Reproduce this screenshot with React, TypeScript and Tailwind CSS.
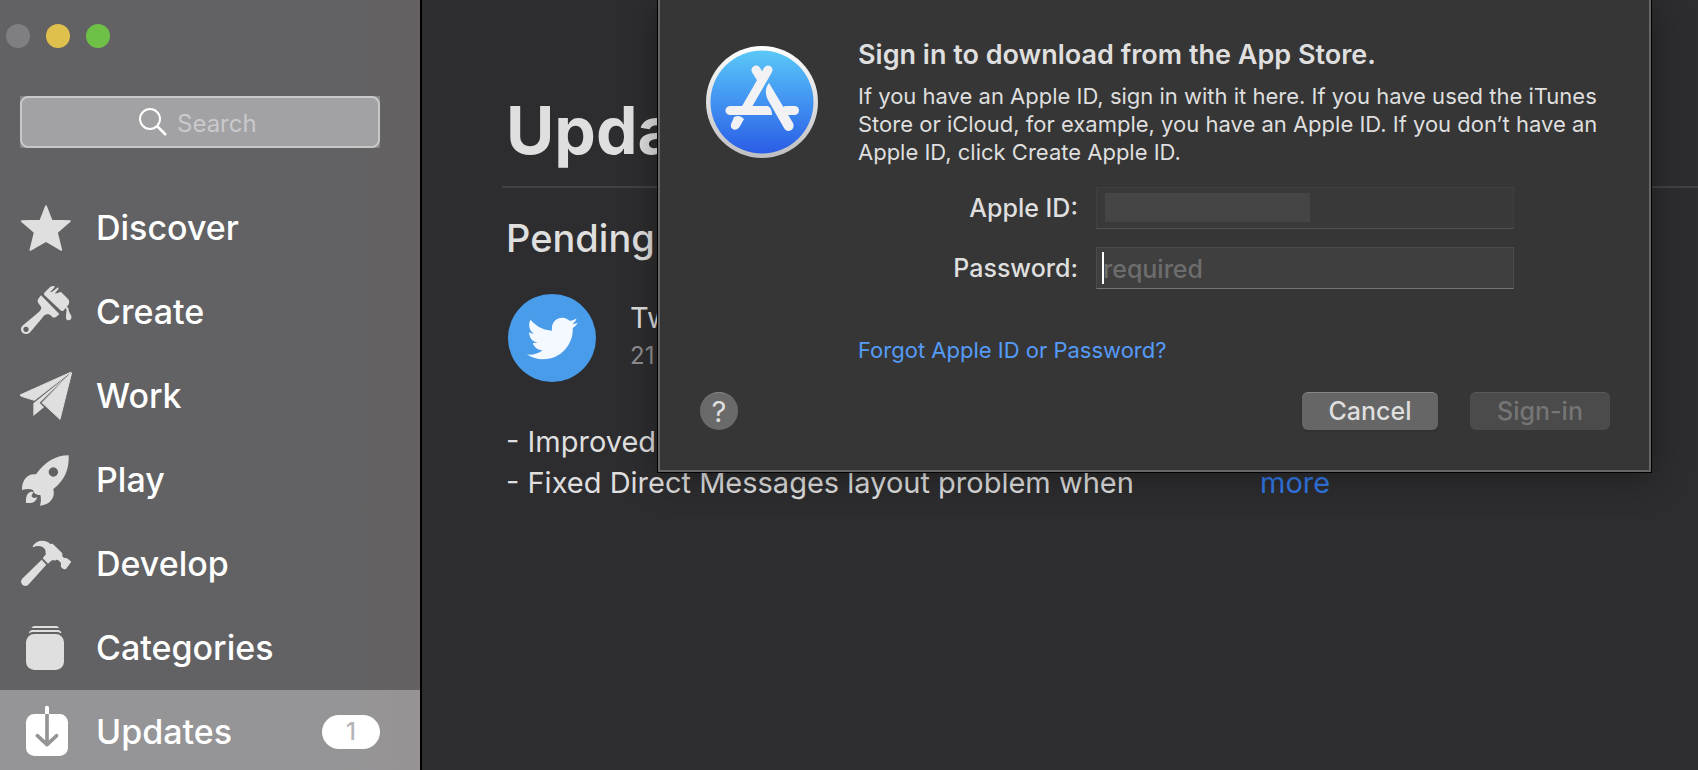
import type { ReactNode } from 'react';
import { FaTwitter } from 'react-icons/fa';

interface NavItem {
    label: string;
    icon: ReactNode;
    badge?: number;
}

const navItems: NavItem[] = [
    {
        label: 'Discover',
        icon: (
            <path
                d="M81 15 L98 59 L153 60 L114 94 L127 147 L81 120 L34 147 L47 94 L8 60 L64 59 Z"
                stroke="currentColor"
                strokeWidth="5"
                strokeLinejoin="round"
            />
        ),
    },
    {
        label: 'Create',
        icon: (
            <>
                <path
                    fillRule="evenodd"
                    d="M66 31 L121 87 L114 94 C108 99 102 99 97 93 C92 87 81 86 74 93 C66 103 48 126 34 141 C27 149 15 149 9 142 C4 135 5 127 12 121 L57 83 C66 75 70 70 64 62 C57 54 54 50 57 43 Z M21 125 a8 8 0 1 0 0.1 0 Z"
                />
                <path d="M76 23 L91 8 C96 3 104 2 108 5 L94 21 C99 24 111 10 117 7 L119 11 L108 25 C112 28 122 20 126 21 L148 43 C151 47 152 55 148 60 L133 77 C130 80 126 77 123 74 L75 29 Z" />
                <path d="M139 68 C145 74 142 80 141 93 C140 103 144 106 149 106 C155 106 159 100 157 93 C155 86 149 82 149 75 C149 69 147 66 143 65 Z" />
            </>
        ),
    },
    {
        label: 'Work',
        icon: (
            <>
                <path d="M3 78 L155 10 L46 94 L7 82 Z" stroke="currentColor" strokeWidth="3" strokeLinejoin="round" />
                <path d="M158 11 L123 151 L69 101 L150 18 Z" stroke="currentColor" strokeWidth="3" strokeLinejoin="round" />
                <path d="M43 103 L144 22 L62 101 L75 115 L43 141 Z" />
            </>
        ),
    },
    {
        label: 'Play',
        icon: (
            <>
                <path
                    fillRule="evenodd"
                    d="M149 7 C108 7 77 29 51 64 C25 60 8 82 9 111 C22 108 31 107 42 111 C44 120 51 126 64 126 C67 137 66 147 63 158 C92 156 110 134 103 108 C137 83 151 49 149 7 Z M103 43 a14 14 0 1 0 0.1 0 Z"
                />
                <path d="M36 116 C25 119 20 129 21 150 C42 152 53 145 54 131 C47 138 36 134 38 127 C39 122 45 119 43 117 Z" />
            </>
        ),
    },
    {
        label: 'Develop',
        icon: (
            <>
                <path d="M41 28 C51 8 79 6 94 21 L101 20 L130 49 L130 57 C134 66 140 60 147 66 L157 74 L141 96 C137 98 130 96 127 91 C123 86 129 82 124 76 C119 69 114 65 108 71 C100 64 92 77 87 80 L71 64 L81 51 C78 45 82 39 75 34 C68 26 54 25 42 31 Z" />
                <path d="M68 68 L82 83 L30 141 C24 149 14 148 9 142 C4 135 6 129 11 124 Z" />
            </>
        ),
    },
    {
        label: 'Categories',
        icon: (
            <>
                <path d="M37 21 C41 16 44 15 48 15 H110 C114 15 118 17 120 21 Z" />
                <path d="M30 34 C34 28 37 27 42 27 H115 C120 27 123 28 127 34 L126 37 C121 34 118 33 114 33 H43 C38 33 35 34 31 37 Z" />
                <rect x="21" y="39" width="114" height="108" rx="25" />
            </>
        ),
    },
    {
        label: 'Updates',
        badge: 1,
        icon: (
            <>
                <rect x="21" y="27" width="126" height="126" rx="25" />
                <path
                    d="M84 27 V118 M55 92 L84 119 L113 92"
                    fill="none"
                    stroke="#959597"
                    strokeWidth="11"
                    strokeLinecap="round"
                    strokeLinejoin="round"
                />
                <path d="M78 27 V7 a6 5 0 0 1 12 0 V27 Z" />
            </>
        ),
    },
];

function Sidebar() {
    return (
        <aside className="flex w-[422px] shrink-0 flex-col border-r-2 border-black bg-linear-to-r from-[#626264] from-80% to-[#656162]">
            <div className="flex gap-4 px-[6px] pt-6">
                <button aria-label="Close" className="h-6 w-6 rounded-full bg-[#7f7f81]" />
                <button aria-label="Minimize" className="h-6 w-6 rounded-full bg-[#e0c04c]" />
                <button aria-label="Zoom" className="h-6 w-6 rounded-full bg-[#6fc047]" />
            </div>

            <div className="mt-12 mr-10 ml-5 bg-[#858587]">
                <label className="flex h-[52px] items-center gap-[10px] rounded-lg border-2 border-[#c8c8c9] bg-[#a2a2a4] pl-[117px]">
                    <svg viewBox="0 0 28 28" className="h-7 w-7 shrink-0" fill="none" stroke="white" strokeWidth="2" aria-hidden="true">
                        <circle cx="11" cy="11" r="10" />
                        <path d="M18 18 L27 27" strokeWidth="2.5" />
                    </svg>
                    <input
                        type="search"
                        aria-label="Search"
                        placeholder="Search"
                        className="w-full min-w-0 bg-transparent pt-1 text-2xl text-white outline-none placeholder:text-[#c9c9cb]"
                    />
                </label>
            </div>

            <nav className="mt-[38px] flex flex-col">
                {navItems.map((item) => {
                    const active = item.label === 'Updates';
                    return (
                        <a
                            key={item.label}
                            href="#"
                            aria-current={active ? 'page' : undefined}
                            className={`flex h-[84px] items-center pr-10 pl-[19px] text-[34px] font-medium text-white ${
                                active ? 'bg-linear-to-r from-[#959597] from-80% to-[#979394]' : ''
                            }`}
                        >
                            <svg
                                viewBox="0 0 162 162"
                                fill="currentColor"
                                className={`mr-[23px] h-[54px] w-[54px] shrink-0 ${active ? 'text-white' : 'text-[#dfdfe0]'}`}
                                aria-hidden="true"
                            >
                                {item.icon}
                            </svg>
                            <span className="pb-[2px]">{item.label}</span>
                            {item.badge && (
                                <span className="ml-auto flex h-[34px] w-[58px] items-center justify-center rounded-full bg-white text-2xl text-[#b4b4b5]">
                                    {item.badge}
                                </span>
                            )}
                        </a>
                    );
                })}
            </nav>
        </aside>
    );
}

function AppStoreIcon() {
    return (
        <svg viewBox="0 0 112 112" className="h-28 w-28 shrink-0" aria-hidden="true">
            <defs>
                <linearGradient id="rim" x1="0" y1="0" x2="0" y2="1">
                    <stop offset="0" stopColor="#ffffff" />
                    <stop offset="1" stopColor="#bfbfc1" />
                </linearGradient>
                <linearGradient id="sky" x1="0" y1="0" x2="0" y2="1">
                    <stop offset="0" stopColor="#5ac8f8" />
                    <stop offset="0.5" stopColor="#4192f1" />
                    <stop offset="1" stopColor="#2a5de6" />
                </linearGradient>
            </defs>
            <circle cx="56" cy="56" r="56" fill="url(#rim)" />
            <circle cx="56" cy="56" r="51.5" fill="url(#sky)" />
            <g stroke="#f2f2f4" strokeWidth="9" strokeLinecap="round" fill="none">
                <path d="M50 24 L55 32" />
                <path d="M62 24 L39 64" />
                <path d="M80 64.5 H88.5" />
            </g>
            <g fill="#f2f2f4">
                <path d="M24 60 H61 C64 60 66 64 66 69 H24 C18 69 18 60 24 60 Z" />
                <path d="M63 37 C59 42 59 48 62 54 L78 82 C81 88 90 84 87 77 Z" />
                <path d="M28 71 C32 69 35 70 38 73 L33.5 81 C29 87 22 82 26 76 Z" />
            </g>
        </svg>
    );
}

function SignInDialog() {
    return (
        <div
            role="dialog"
            aria-labelledby="signin-title"
            className="absolute top-0 right-[46px] left-[235px] border-x border-b border-black shadow-[0_4px_32px_rgba(0,0,0,0.35)]"
        >
            <form className="border-x-2 border-b-2 border-[#666666] bg-[#363636] pt-[38px] pr-[39px] pb-10 pl-10 text-[#dfdfdf]">
                <div className="flex gap-10 pl-[6px]">
                    <div className="pt-2">
                        <AppStoreIcon />
                    </div>
                    <div className="min-w-0 flex-1">
                        <h2 id="signin-title" className="text-[27px] leading-[34px] font-semibold">
                            Sign in to download from the App Store.
                        </h2>
                        <p className="mt-[10px] text-[22px] leading-7">
                            If you have an Apple ID, sign in with it here. If you have used the iTunes Store or iCloud, for
                            example, you have an Apple ID. If you don’t have an Apple ID, click Create Apple ID.
                        </p>

                        <div className="mt-[21px] flex flex-col gap-[18px] text-[25px] font-medium">
                            <div className="flex items-center gap-[18px]">
                                <label htmlFor="apple-id" className="w-[220px] pt-[2px] text-right">
                                    Apple ID:
                                </label>
                                <div className="relative w-[418px]">
                                    <input
                                        id="apple-id"
                                        type="text"
                                        className="block h-[42px] w-full border border-[#404040] border-b-[#505050] bg-[#393939] px-2 outline-none"
                                    />
                                    <span className="absolute top-[6px] left-[9px] h-[29px] w-[205px] bg-[#454545]" />
                                </div>
                            </div>
                            <div className="flex items-center gap-[18px]">
                                <label htmlFor="password" className="w-[220px] pt-[2px] text-right">
                                    Password:
                                </label>
                                <div className="relative w-[418px]">
                                    <input
                                        id="password"
                                        type="password"
                                        placeholder="required"
                                        className="block h-[42px] w-full border border-[#4c4c4c] border-b-[#747474] bg-[#3f3f3f] px-[6px] pt-[2px] outline-none placeholder:text-[#6d6d6d]"
                                    />
                                    <span className="absolute top-[5px] left-[6px] h-8 w-[2px] bg-white" />
                                </div>
                            </div>
                        </div>

                        <a href="#" className="mt-[47px] block text-[22px] leading-7 text-[#559bf8]">
                            Forgot Apple ID or Password?
                        </a>
                    </div>
                </div>

                <div className="mt-7 flex items-center gap-8 text-[25px] font-medium">
                    <button
                        type="button"
                        aria-label="Help"
                        className="mr-auto flex h-[38px] w-[38px] items-center justify-center rounded-full border-t border-[#858585] bg-[#6a6a6a] text-[29px] font-normal"
                    >
                        ?
                    </button>
                    <button
                        type="button"
                        className="flex h-[38px] w-[136px] items-center justify-center rounded-md border-t border-[#858585] bg-[#666666] shadow-sm"
                    >
                        Cancel
                    </button>
                    <button
                        type="submit"
                        disabled
                        className="flex h-[38px] w-[140px] items-center justify-center rounded-md border-t border-[#5a5a5a] bg-[#4b4b4b] text-[#757575]"
                    >
                        Sign-in
                    </button>
                </div>
            </form>
        </div>
    );
}

export default function App() {
    return (
        <div className="flex h-screen overflow-hidden bg-[#2d2d2f] font-['Inter',sans-serif] text-[#dfdfdf]">
            <Sidebar />

            <main className="relative min-w-0 flex-1 overflow-hidden pl-20">
                <h1 className="border-b-2 border-[#414143] pt-[90px] pb-4 pl-1 text-[66px] leading-[80px] font-bold">
                    Updates
                </h1>

                <div className="pl-1">
                    <h2 className="mt-[26px] text-[38px] leading-[48px] font-medium">Pending</h2>

                    <div className="mt-8 flex items-center gap-[34px] pl-[2px]">
                        <div className="flex h-[88px] w-[88px] items-center justify-center rounded-full bg-[#489cea] text-[#f4f9ff]">
                            <FaTwitter className="h-[51px] w-[51px]" />
                        </div>
                        <div className="pb-1">
                            <h3 className="text-[29px] leading-10">Twitter</h3>
                            <p className="text-2xl leading-9 text-[#8f8f91]">21 Oct 2019</p>
                        </div>
                    </div>

                    <div className="mt-[39px] flex items-end text-[29px] leading-[41px]">
                        <div className="w-[754px]">
                            <p>- Improved</p>
                            <p>- Fixed Direct Messages layout problem when</p>
                        </div>
                        <button className="text-[#3379e8]">more</button>
                    </div>
                </div>

                <SignInDialog />
            </main>
        </div>
    );
}
